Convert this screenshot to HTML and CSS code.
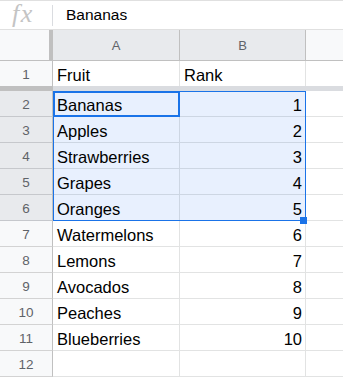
FILE: index.html
```html
<!DOCTYPE html>
<html>
<head>
<meta charset="utf-8">
<link rel="stylesheet" href="styles.css">
</head>
<body>
<div class="fbar">
  <span class="fx">fx</span>
  <span class="fsep"></span>
  <span class="fval">Bananas</span>
</div>
<div class="sheet">
  <div class="corner"></div>
  <div class="ch sel">A</div>
  <div class="ch sel">B</div>
  <div class="ch last"></div>

  <div class="rh r1">1</div>
  <div class="c r1">Fruit</div>
  <div class="c r1">Rank</div>
  <div class="c r1 last"></div>

  <div class="freeze-h"></div>
  <div class="freeze-c"></div>

  <div class="rh sel">2</div><div class="c s">Bananas</div><div class="c s n">1</div><div class="c last"></div>
  <div class="rh sel">3</div><div class="c s">Apples</div><div class="c s n">2</div><div class="c last"></div>
  <div class="rh sel">4</div><div class="c s">Strawberries</div><div class="c s n">3</div><div class="c last"></div>
  <div class="rh sel">5</div><div class="c s">Grapes</div><div class="c s n">4</div><div class="c last"></div>
  <div class="rh sel">6</div><div class="c s">Oranges</div><div class="c s n">5</div><div class="c last"></div>
  <div class="rh">7</div><div class="c">Watermelons</div><div class="c n">6</div><div class="c last"></div>
  <div class="rh">8</div><div class="c">Lemons</div><div class="c n">7</div><div class="c last"></div>
  <div class="rh">9</div><div class="c">Avocados</div><div class="c n">8</div><div class="c last"></div>
  <div class="rh">10</div><div class="c">Peaches</div><div class="c n">9</div><div class="c last"></div>
  <div class="rh">11</div><div class="c">Blueberries</div><div class="c n">10</div><div class="c last"></div>
  <div class="rh">12</div><div class="c"></div><div class="c"></div><div class="c last"></div>

  <div class="range"></div>
  <div class="active"></div>
  <div class="handle"></div>
</div>
</body>
</html>
```
FILE: styles.css
```css
html, body {
  margin: 0;
  padding: 0;
  background: #ffffff;
}
body {
  font-family: "Liberation Sans", Arial, sans-serif;
  width: 343px;
  height: 378px;
  overflow: hidden;
}
.fbar {
  box-sizing: border-box;
  height: 30px;
  border-top: 1px solid #e0e0e0;
  border-bottom: 1px solid #e0e0e0;
  display: flex;
  align-items: center;
}
.fx {
  width: 52px;
  box-sizing: border-box;
  padding-left: 12px;
  font-family: "Liberation Serif", "Times New Roman", serif;
  font-style: italic;
  font-size: 26px;
  color: #c4c4c4;
  letter-spacing: 1.5px;
  line-height: 28px;
  margin-top: -2px;
}
.fsep {
  width: 1px;
  height: 21px;
  background: #dadce0;
  align-self: center;
}
.fval {
  padding-left: 13px;
  font-size: 15.5px;
  color: #000;
  margin-top: -1px;
}
.sheet {
  position: relative;
  display: grid;
  grid-template-columns: 53px 127px 126px 1fr;
  grid-template-rows: 31px 25px 5px repeat(11, 26px);
}
.sheet > div {
  box-sizing: border-box;
}
.corner {
  background: #f8f9fa;
  border-right: 4px solid #c0c0c0;
  border-bottom: 1px solid #c0c0c0;
}
.ch {
  background: #f8f9fa;
  border-right: 1px solid #c0c0c0;
  border-bottom: 1px solid #c0c0c0;
  font-size: 13px;
  color: #5f6368;
  display: flex;
  align-items: center;
  justify-content: center;
}
.ch.sel {
  background: #e8eaed;
}
.ch.last {
  border-right: none;
}
.rh {
  background: #f8f9fa;
  border-right: 1px solid #c0c0c0;
  border-bottom: 1px solid #d3d3d3;
  font-size: 13.5px;
  color: #5f6368;
  display: flex;
  align-items: center;
  justify-content: center;
  padding-top: 1px;
}
.rh.sel {
  background: #e8eaed;
  border-bottom-color: #c6c8cc;
}
.rh.r1 {
  border-bottom: none;
}
.c {
  border-right: 1px solid #e2e3e3;
  border-bottom: 1px solid #e2e3e3;
  font-size: 16.5px;
  line-height: 21px;
  padding: 4px 3px 0 4px;
  color: #000;
  white-space: nowrap;
  overflow: hidden;
}
.c.r1 {
  border-bottom: none;
  padding-top: 4px;
}
.c.last {
  border-right: none;
}
.c.s {
  background: #e8f0fe;
  border-right-color: #cdd6e3;
  border-bottom-color: #cdd6e3;
}
.c.n {
  text-align: right;
}
.freeze-h {
  background: #c0c0c0;
}
.freeze-c {
  grid-column: 2 / -1;
  background: #dadce0;
}
.range {
  position: absolute;
  left: 53px;
  top: 61px;
  width: 253px;
  height: 130px;
  border: 1px solid #1a73e8;
  pointer-events: none;
}
.active {
  position: absolute;
  left: 53px;
  top: 61px;
  width: 127px;
  height: 26px;
  border: 2px solid #1a73e8;
}
.handle {
  position: absolute;
  left: 300px;
  top: 187px;
  width: 7px;
  height: 7px;
  background: #1a73e8;
}
```
